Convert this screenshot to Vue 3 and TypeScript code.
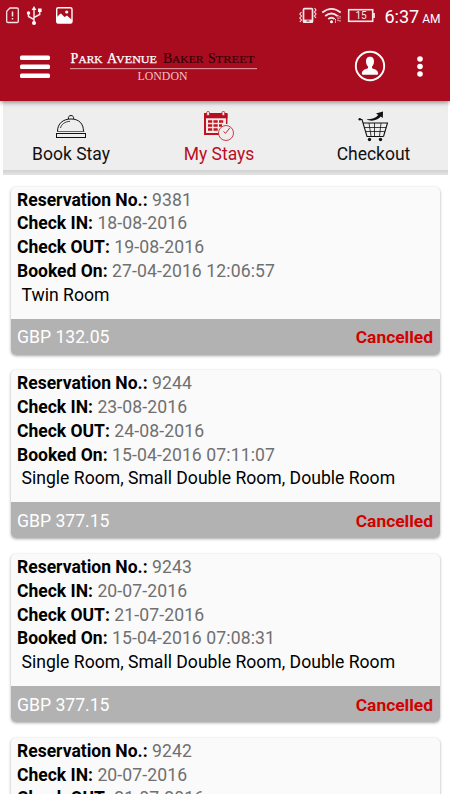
<script setup lang="ts">
interface Stay {
  id: string
  checkIn: string
  checkOut: string
  bookedOn: string
  rooms: string
  price: string
  status: string
}

const stays: Stay[] = [
  { id: '9381', checkIn: '18-08-2016', checkOut: '19-08-2016', bookedOn: '27-04-2016 12:06:57', rooms: 'Twin Room', price: 'GBP 132.05', status: 'Cancelled' },
  { id: '9244', checkIn: '23-08-2016', checkOut: '24-08-2016', bookedOn: '15-04-2016 07:11:07', rooms: 'Single Room, Small Double Room, Double Room', price: 'GBP 377.15', status: 'Cancelled' },
  { id: '9243', checkIn: '20-07-2016', checkOut: '21-07-2016', bookedOn: '15-04-2016 07:08:31', rooms: 'Single Room, Small Double Room, Double Room', price: 'GBP 377.15', status: 'Cancelled' },
]

const partialStay = { id: '9242', checkIn: '20-07-2016', checkOut: '21-07-2016' }
</script>

<template>
  <div class="screen">
    <header class="top">
      <div class="status-bar">
        <svg width="80" height="32" viewBox="0 0 80 32" fill="none" stroke="#f8e6e8">
          <path d="M10 8H17Q18.300 8 18.300 9.300V21.200Q18.300 22.500 17 22.500H8Q6.700 22.500 6.700 21.200V11.300Z" stroke-width="1.300" />
          <path d="M12.500 11.500V16.500M12.500 18V19.500" stroke-width="1.500" />
          <path d="M34 9V22M34 19.500L28.500 16.500V13.500M34 17.500L39.700 14.500V11" stroke-width="1.500" />
          <path d="M34 6L36.300 10H31.700Z" fill="#fff" stroke="none" />
          <circle cx="34" cy="23" r="2" fill="#fff" stroke="none" />
          <circle cx="28.500" cy="13" r="1.700" fill="#fff" stroke="none" />
          <rect x="38" y="8.500" width="3.600" height="3.500" fill="#fff" stroke="none" />
          <rect x="56.700" y="7.700" width="15.300" height="15.300" rx="1.500" stroke="#fff" stroke-width="1.400" />
          <path d="M57 17L58.500 15.500L60 14L61 13.500L64.500 17L67 15.500L72 20V23H57Z" fill="#fff" stroke="none" />
          <circle cx="66.700" cy="12" r="1.600" fill="#fff" stroke="none" />
        </svg>
        <div class="status-right">
          <svg width="78" height="32" viewBox="298 0 78 32" fill="none" stroke="#f8e6e8">
            <rect x="303.500" y="8.700" width="9" height="13.500" rx="1" stroke-width="1.700" />
            <path d="M303 21H313" stroke-width="2.800" />
            <path d="M306.500 21H309.500" stroke="#a90c1f" stroke-width="1" />
            <path d="M301.500 12L299.800 14L301.500 16L299.800 18L301.500 20L299.800 22M314.500 8L316 10L314.500 12L316 14L314.500 16L316 18" stroke-width="1.100" />
            <path d="M322.300 12.500Q331.500 5.200 340.700 12.500M325.200 16Q331.500 11 337.500 16M328.200 19Q331.500 16.400 334.500 19" stroke-width="1.800" />
            <circle cx="331.500" cy="21.700" r="1.500" fill="#fff" stroke="none" />
            <path d="M338 15V22M335.500 19V23M340 16V19M340 20V22" stroke-width="1" stroke-dasharray="1.500 .8" />
            <rect x="348.700" y="9.700" width="24" height="11.600" stroke-width="1.600" />
            <path d="M374 13V18" stroke-width="1.800" />
            <text x="361" y="19.300" text-anchor="middle" class="battery-text">15</text>
          </svg>
          <span class="clock">6:37</span><span class="meridiem">AM</span>
        </div>
      </div>
      <div class="app-bar">
        <svg class="menu" width="30" height="24" viewBox="0 0 30 24" fill="#fff">
          <rect y="0.500" width="30" height="4.400" rx="1.500" />
          <rect y="9.500" width="30" height="4.400" rx="1.500" />
          <rect y="18.500" width="30" height="4.400" rx="1.500" />
        </svg>
        <svg class="brand" width="190" height="36" viewBox="68 48 190 36">
          <text y="62" class="brand-light"><tspan x="70.500" class="cap">P</tspan><tspan x="78.500" textLength="24" lengthAdjust="spacingAndGlyphs">ARK</tspan><tspan x="107" class="cap">A</tspan><tspan x="116" textLength="41" lengthAdjust="spacingAndGlyphs">VENUE</tspan></text>
          <text y="62" class="brand-dark"><tspan x="163" class="cap">B</tspan><tspan x="172" textLength="31.500" lengthAdjust="spacingAndGlyphs">AKER</tspan><tspan x="208" class="cap">S</tspan><tspan x="215.500" textLength="39" lengthAdjust="spacingAndGlyphs">TREET</tspan></text>
          <rect x="70" y="67" width="187" height="1.200" fill="#dc8b94" />
          <text x="137.500" y="79" class="brand-city" textLength="50" lengthAdjust="spacingAndGlyphs">LONDON</text>
        </svg>
        <svg class="profile" width="32" height="32" viewBox="0 0 32 32">
          <circle cx="16" cy="16" r="14.200" fill="none" stroke="#fff" stroke-width="1.900" />
          <path d="M16 6.700C19.200 6.700 20 9 20 11.500C20 14 19 15.500 18 16.500V18.300C20 19.200 24.200 19.800 24.200 23.800Q24.200 24.800 23 24.800H9Q7.800 24.800 7.800 23.800C7.800 19.800 12 19.200 14 18.300V16.500C13 15.500 12 14 12 11.500C12 9 12.800 6.700 16 6.700Z" fill="#fff" />
        </svg>
        <svg class="more" width="6" height="22" viewBox="0 0 6 22" fill="#fff">
          <circle cx="3" cy="3" r="2.800" /><circle cx="3" cy="10.500" r="2.800" /><circle cx="3" cy="18" r="2.800" />
        </svg>
      </div>
    </header>

    <nav class="tabs">
      <div class="tab book">
        <svg width="32" height="32" viewBox="55 110 32 32" fill="none" stroke="#111" stroke-width="1">
          <rect x="56.500" y="133.500" width="29" height="4" />
          <path d="M57.500 131.500C57.500 123.500 63 119 71 119S83.500 123.500 83.500 131.500" />
          <path d="M60.500 128C61.500 124 65 121.700 70 121.300" stroke-width=".8" />
          <path d="M68.500 119C68 117 69 115.500 71 115.500S74 117 73.500 119" />
          <path d="M57 131.500H84.500" stroke="#444" stroke-width=".8" />
        </svg>
        <span>Book Stay</span>
      </div>
      <div class="tab active">
        <svg width="32" height="32" viewBox="203 110 32 32" fill="none" stroke="#c4121c">
          <path d="M205 114V134H220" stroke-width="2" />
          <path d="M226.700 114V124" stroke-width="1.500" />
          <path d="M204 113H227.500V118.300H204Z" fill="#b90e1e" stroke="none" />
          <rect x="206.700" y="111.500" width="2.700" height="4" rx="1" fill="#eee" stroke-width=".8" />
          <rect x="222" y="111.500" width="2.700" height="4" rx="1" fill="#eee" stroke-width=".8" />
          <path d="M208 121.500H224M208 125.500H222M208 129.500H219" stroke-width="2.700" stroke-dasharray="4.200 1.300" />
          <circle cx="226" cy="133" r="7.500" fill="#eee" stroke-width=".8" />
          <path d="M223.500 131.500L225.500 133.300L230 127.700" stroke-width=".9" />
        </svg>
        <span>My Stays</span>
      </div>
      <div class="tab checkout">
        <svg width="32" height="32" viewBox="358 110 32 32" fill="none" stroke="#111">
          <path d="M359 119.500H362L367 136.500H383.500" stroke-width="1.100" />
          <path d="M363 123H387.500L383.500 136.500" stroke-width="1.100" />
          <path d="M364.500 127.500H386M366 131.500H385M369 123L371 136M374.500 123V136M381 123L379.500 136" stroke-width=".8" />
          <circle cx="369.500" cy="139.500" r="1.700" fill="#111" stroke="none" /><circle cx="380.500" cy="139.500" r="1.700" fill="#111" stroke="none" />
          <path d="M366.500 119.200C371 122 377.500 120.500 380.800 116.500L382.800 118L383 111.500L376 113.500L378.300 115C375.500 118.200 371 119.500 366.500 119.200Z" fill="#111" stroke="none" />
          <circle cx="359.800" cy="119.300" r="1.300" fill="#111" stroke="none" />
        </svg>
        <span>Checkout</span>
      </div>
    </nav>

    <main class="list">
      <article v-for="stay in stays" :key="stay.id" class="card">
        <div class="details">
          <p><b>Reservation No.:</b> {{ stay.id }}</p>
          <p><b>Check IN:</b> {{ stay.checkIn }}</p>
          <p><b>Check OUT:</b> {{ stay.checkOut }}</p>
          <p><b>Booked On:</b> {{ stay.bookedOn }}</p>
          <p class="rooms">{{ stay.rooms }}</p>
        </div>
        <footer class="summary">
          <span>{{ stay.price }}</span>
          <strong>{{ stay.status }}</strong>
        </footer>
      </article>
      <article class="card">
        <div class="details">
          <p><b>Reservation No.:</b> {{ partialStay.id }}</p>
          <p><b>Check IN:</b> {{ partialStay.checkIn }}</p>
          <p><b>Check OUT:</b> {{ partialStay.checkOut }}</p>
        </div>
      </article>
    </main>
  </div>
</template>

<style>
body {
  margin: 0;
  background: #fff;
}
</style>

<style scoped>
.screen {
  width: 450px;
  height: 794px;
  overflow: hidden;
  display: flex;
  flex-direction: column;
  background: #fff;
  font-family: Roboto, sans-serif;
}
.top {
  flex: none;
  height: 101px;
  background: #a90c1f;
  color: #fff;
  box-shadow: 0 1px 5px rgba(0, 0, 0, 0.5);
  z-index: 1;
}
.status-bar {
  height: 32px;
  display: flex;
  justify-content: space-between;
}
.status-right {
  display: flex;
  align-items: baseline;
  width: 152px;
}
.status-right svg {
  align-self: flex-start;
}
.battery-text {
  font: 10px Roboto, sans-serif;
  fill: #f8e6e8;
  stroke: none;
}
.clock {
  font-size: 18px;
  line-height: 34px;
  margin-left: 8.500px;
  color: #fff;
}
.meridiem {
  font-size: 12px;
  margin-left: 3px;
  color: #fff;
}
.app-bar {
  height: 69px;
  display: flex;
  align-items: center;
  padding: 0 27px 0 20px;
}
.brand {
  margin-left: 18px;
}
.brand text {
  font-family: "Liberation Serif", serif;
  font-size: 11px;
}
.brand .cap {
  font-size: 14px;
}
.brand .brand-light {
  fill: #fff;
  stroke: #fff;
  stroke-width: 0.25;
}
.brand .brand-dark {
  fill: #300007;
  stroke: #300007;
  stroke-width: 0.15;
}
.brand .brand-city {
  font-size: 12px;
  fill: #efc5c9;
}
.profile {
  margin: -1px 0 0 auto;
}
.more {
  margin-left: 31px;
}
.tabs {
  flex: none;
  box-sizing: border-box;
  height: 74px;
  margin: 0 2.500px;
  display: flex;
  background: linear-gradient(#d2d2d2, #e4e4e4) bottom / 100% 5px no-repeat #eee;
}
.tab {
  flex: 1;
  display: flex;
  flex-direction: column;
  align-items: center;
  padding-top: 9px;
  font-size: 17.500px;
  line-height: 24px;
  color: #111;
}
.tab svg {
  flex: none;
}
.tab.book {
  flex: 0 0 137px;
}
.tab.active {
  flex: 0 0 159px;
  color: #b90e1e;
}
.tab.checkout {
  flex: 0 0 150px;
}
.list {
  display: flex;
  flex-direction: column;
  gap: 15.750px;
  padding: 11.500px 10.500px 0;
}
.card {
  flex: none;
  height: 168px;
  display: flex;
  flex-direction: column;
  border-radius: 5px;
  overflow: hidden;
  background: #fafafa;
  box-shadow: 0 1px 3px rgba(0, 0, 0, 0.35);
}
.details {
  flex: 1;
  padding: 2.200px 6.500px 0;
  color: #707070;
  font-size: 17.600px;
  line-height: 23.750px;
}
.details p {
  margin: 0;
  white-space: nowrap;
  letter-spacing: 0.100px;
}
.details b {
  color: #000;
  font-size: 17.500px;
  letter-spacing: 0;
}
.details .rooms {
  color: #000;
  padding-left: 4.500px;
  letter-spacing: 0;
}
.summary {
  flex: none;
  height: 36px;
  padding: 1px 6.500px 0;
  box-sizing: border-box;
  display: flex;
  align-items: center;
  justify-content: space-between;
  background: #b2b2b2;
  color: #fff;
  font-size: 17.600px;
}
.summary strong {
  color: #d40000;
  font-size: 17.400px;
}
</style>
